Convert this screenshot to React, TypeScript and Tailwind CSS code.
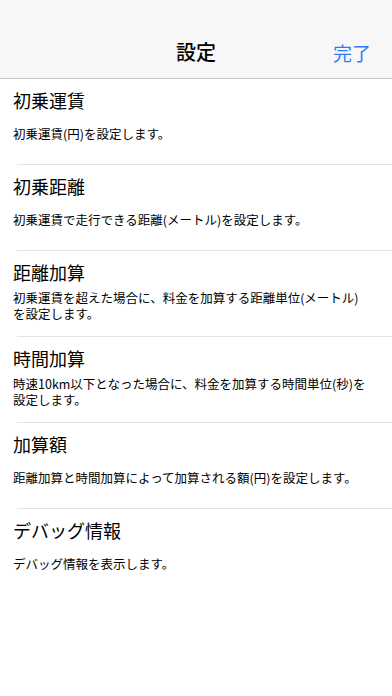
import React from "react";

const items = [
  { title: "初乗運賃", desc: ["初乗運賃(円)を設定します。"] },
  { title: "初乗距離", desc: ["初乗運賃で走行できる距離(メートル)を設定します。"] },
  {
    title: "距離加算",
    desc: ["初乗運賃を超えた場合に、料金を加算する距離単位(メートル)", "を設定します。"],
  },
  {
    title: "時間加算",
    desc: ["時速10km以下となった場合に、料金を加算する時間単位(秒)を", "設定します。"],
  },
  { title: "加算額", desc: ["距離加算と時間加算によって加算される額(円)を設定します。"] },
  { title: "デバッグ情報", desc: ["デバッグ情報を表示します。"] },
];

export default function App() {
  return (
    <div className="w-[392px] h-[696px] bg-white text-black font-['Noto_Sans_CJK_JP','Noto_Sans',sans-serif] overflow-hidden">
      <header className="h-[79px] bg-[#f7f7f7] border-b border-[#c4c4c4] grid grid-cols-[1fr_auto_1fr] items-center pt-[26px]">
        <div />
        <h1 className="text-[20px] font-medium leading-none">設定</h1>
        <div className="flex justify-end pr-[21px]">
          <button className="text-[19px] leading-none text-[#2d7cf4]">完了</button>
        </div>
      </header>

      <ul>
        {items.map((item, i) => (
          <li key={item.title}>
            <div className="h-[85px] flex flex-col pl-[13px] pr-[8px] pt-[9px] pb-[9px]">
              <div className="text-[18px] leading-[24px]">{item.title}</div>
              <div className="flex-1 flex flex-col justify-center">
                {item.desc.map(line => (
                  <p key={line} className="text-[12.5px] leading-[16px] whitespace-nowrap">
                    {line}
                  </p>
                ))}
              </div>
            </div>
            {i < items.length - 1 && <div className="ml-[17px] h-px bg-[#e2e2e2]" />}
          </li>
        ))}
      </ul>
    </div>
  );
}
